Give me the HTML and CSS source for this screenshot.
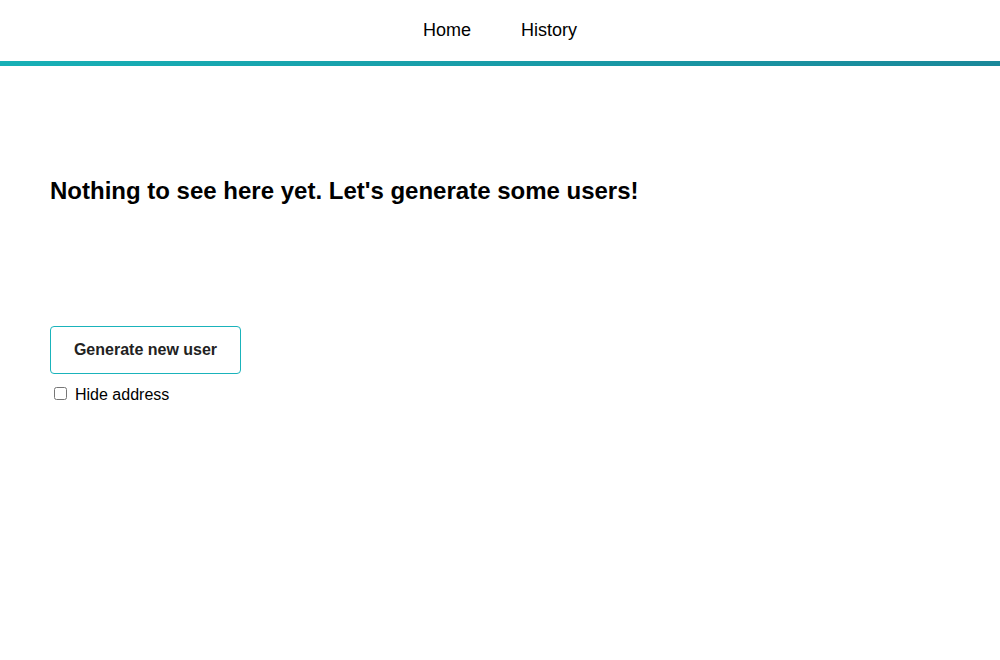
FILE: index.html
```html
<!DOCTYPE html>
<html>
<head>
<meta charset="utf-8">
<link rel="stylesheet" href="styles.css">
</head>
<body>
<header class="header">
  <nav class="nav">
    <a class="nav-link" href="#">Home</a>
    <a class="nav-link" href="#">History</a>
  </nav>
</header>
<div class="bar"></div>
<main class="main">
  <h2 class="title">Nothing to see here yet. Let's generate some users!</h2>
  <div class="controls">
    <button class="gen-btn">Generate new user</button>
    <label class="check"><input type="checkbox" class="check-box"><span class="check-text">Hide address</span></label>
  </div>
</main>
</body>
</html>
```
FILE: styles.css
```css
html, body {
  margin: 0;
  padding: 0;
  background: #fff;
  font-family: "Liberation Sans", Arial, sans-serif;
  color: #000;
}
.header {
  height: 61px;
  display: flex;
  justify-content: center;
  align-items: center;
}
.nav {
  display: flex;
  gap: 50px;
}
.nav-link {
  font-size: 18px;
  color: #000;
  text-decoration: none;
}
.bar {
  height: 5px;
  background: linear-gradient(to right, #17b0b6, #1a889a);
}
.main {
  padding: 0 50px;
}
.title {
  margin: 111px 0 0;
  font-size: 24px;
  font-weight: bold;
  line-height: 28px;
}
.controls {
  margin-top: 121px;
  display: flex;
  flex-direction: column;
  align-items: flex-start;
}
.gen-btn {
  width: 191px;
  height: 48px;
  background: #fff;
  border: 1px solid #1ab3bb;
  border-radius: 4px;
  font-family: "Liberation Sans", Arial, sans-serif;
  font-size: 16px;
  font-weight: bold;
  color: #222;
  cursor: pointer;
}
.check {
  margin-top: 13px;
  display: flex;
  align-items: flex-start;
  font-size: 16px;
  line-height: 18px;
}
.check-box {
  margin: 0 8px 0 4px;
  width: 13px;
  height: 13px;
}
.check-text {
  margin-top: -1px;
}
```
